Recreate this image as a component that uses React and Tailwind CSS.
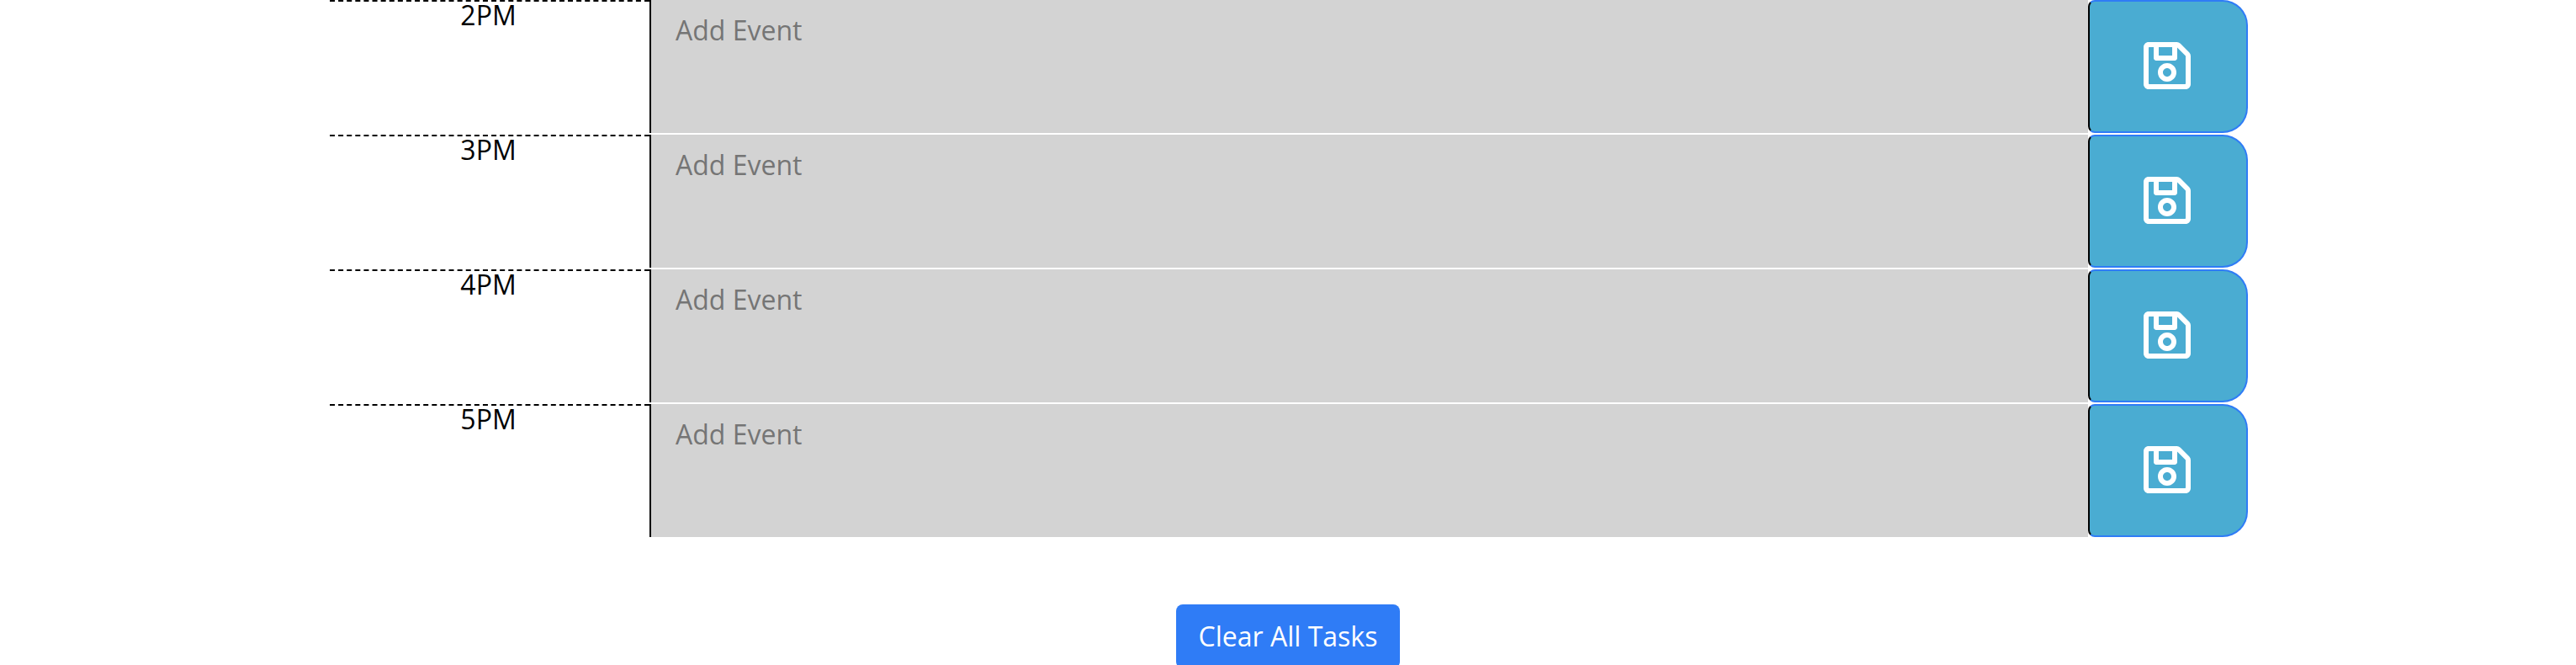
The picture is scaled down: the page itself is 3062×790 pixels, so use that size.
import { FaRegSave } from "react-icons/fa";

const hours = ["2PM", "3PM", "4PM", "5PM"];

function TimeBlock({ hour }) {
  return (
    <div className="grid h-[158px] grid-cols-[380px_1710px_190px]">
      <div className="border-t-2 border-dashed border-black pr-[3px] text-center leading-8 text-black">{hour}</div>
      <textarea
        placeholder="Add Event"
        className="block h-full w-full resize-none border-l-2 border-black bg-[#d3d3d3] px-[29px] py-3 leading-[48px] text-black outline-none placeholder:text-[#757575]"
      />
      <button
        aria-label="Save"
        className="flex items-center justify-center rounded-l-lg rounded-r-[30px] border-2 border-[#2f7cf6] border-l-black bg-[#4aacd2] pr-0.5 pb-0.5 text-white"
      >
        <FaRegSave className="h-16 w-14" />
      </button>
    </div>
  );
}

export default function App() {
  return (
    <main className="h-[790px] overflow-hidden bg-white pl-[392px] font-['Open_Sans','Noto_Sans',sans-serif] text-[32px] leading-[36px]">
      <div className="flex w-[2280px] flex-col gap-0.5">
        {hours.map((hour) => (
          <TimeBlock key={hour} hour={hour} />
        ))}
      </div>
      <div className="flex w-[2278px] justify-center pt-20">
        <button className="h-[76px] w-[266px] rounded-lg bg-[#2f7cf6] text-white">Clear All Tasks</button>
      </div>
    </main>
  );
}
